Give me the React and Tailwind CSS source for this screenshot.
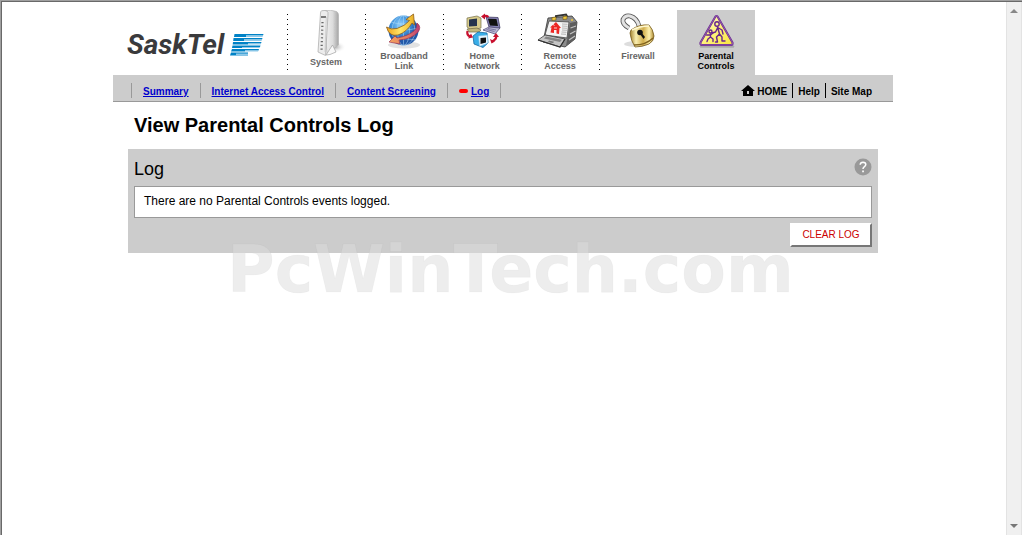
import React from 'react';

const subLinks = [
    { label: 'Summary' },
    { label: 'Internet Access Control' },
    { label: 'Content Screening' },
    { label: 'Log', current: true },
];

function SystemIcon() {
    return (
        <svg className="block shrink-0" width="78" height="47" viewBox="0 0 78 47" aria-hidden="true">
            <defs>
                <linearGradient id="routerSide" x1="0" x2="1">
                    <stop offset="0" stopColor="#f4f4f4" />
                    <stop offset="0.6" stopColor="#dcdcdc" />
                    <stop offset="1" stopColor="#a5a5a5" />
                </linearGradient>
                <radialGradient id="routerShade">
                    <stop offset="0" stopColor="#a5a5a5" />
                    <stop offset="1" stopColor="#fff" stopOpacity="0" />
                </radialGradient>
            </defs>
            <ellipse cx="48" cy="37" rx="11" ry="6" fill="url(#routerShade)" />
            <path d="M37 0.700Q44 -0.500 49.500 1.500Q51.500 2.500 51.500 5V35L40 44Z" fill="url(#routerSide)" stroke="#b4b4b4" strokeWidth="0.7" />
            <path d="M34.500 0.800Q38 0 40 1Q41.500 2 41 5L38.500 45.500L31 42L33.500 3Q33.600 1.500 34.500 0.800Z" fill="#ececec" stroke="#a6a6a6" strokeWidth="0.7" />
            <path d="M34 7h5" stroke="#555" strokeWidth="1.500" />
            <path d="M35.500 12L34.500 41" stroke="#666" strokeWidth="2.200" strokeDasharray="1.200 2.600" />
            <path d="M39.300 7L38 42" stroke="#c4c4c4" strokeWidth="0.700" />
            <path d="M39 45L45.500 35L49 42L43 44.500Z" fill="#f8f8f8" stroke="#a0a0a0" strokeWidth="0.700" />
            <path d="M47.500 13v14" stroke="#c8c8c8" strokeDasharray="2 1" />
        </svg>
    );
}

function BroadbandIcon() {
    return (
        <svg className="block shrink-0" width="78" height="41" viewBox="0 0 78 41" aria-hidden="true">
            <defs>
                <radialGradient id="globe" cx="0.4" cy="0.3">
                    <stop offset="0" stopColor="#8fd0ff" />
                    <stop offset="0.6" stopColor="#4294dc" />
                    <stop offset="1" stopColor="#2158a8" />
                </radialGradient>
                <linearGradient id="goldArrow" x1="0" x2="1">
                    <stop offset="0" stopColor="#f0a51c" />
                    <stop offset="0.5" stopColor="#ffe66a" />
                    <stop offset="1" stopColor="#e9ad22" />
                </linearGradient>
                <linearGradient id="pinkArrow" x1="0" x2="1">
                    <stop offset="0" stopColor="#f6a45e" />
                    <stop offset="0.6" stopColor="#e07a65" />
                    <stop offset="1" stopColor="#b93a75" />
                </linearGradient>
            </defs>
            <ellipse cx="39" cy="35" rx="16" ry="3.500" fill="#e2e2e2" />
            <circle cx="38.500" cy="20.500" r="15" fill="url(#globe)" />
            <g fill="none" stroke="#b5ddf7" strokeWidth="0.500">
                <ellipse cx="38.500" cy="20.500" rx="6" ry="15" />
                <ellipse cx="38.500" cy="20.500" rx="11.500" ry="15" />
                <path d="M38.500 6v29M26 12Q38 16 51 12M24 18Q38 22 53 18M27 30Q38 27 51 30" />
            </g>
            <path d="M52 13Q57 17 53 22Q47 29 34 30L35 34L24 32L30 26L32 28Q43 26 49 21Q52.500 18 52 13Z" fill="url(#pinkArrow)" stroke="#9c3450" strokeWidth="0.700" />
            <path d="M21.500 17Q26 20 32 18.500Q40 16 44.500 10.500L41 9.500L48.500 4L49.500 15L47 13Q42 22 33 25Q24 27 21.500 17Z" fill="url(#goldArrow)" stroke="#8e5e18" strokeWidth="0.800" />
        </svg>
    );
}

function HomeNetworkIcon() {
    return (
        <svg className="block shrink-0" width="78" height="41" viewBox="0 0 78 41" aria-hidden="true">
            {/* desktop */}
            <path d="M24 8L34 6L38 8V18L28 20L24 17Z" fill="#d8cc8c" stroke="#77704a" strokeWidth="0.700" />
            <path d="M26 9.500L34 8.500V16L26 16.500Z" fill="#26344d" />
            <path d="M24 19L34 18L38 20L36 22L26 22Z" fill="#c3b87b" stroke="#6e6745" strokeWidth="0.700" />
            {/* laptop */}
            <path d="M43 7L55 7.500L57 18L46 17Z" fill="#8582b4" stroke="#454066" strokeWidth="0.800" />
            <path d="M45 8.800L53.500 9L55 16L47 15.500Z" fill="#111" />
            <path d="M46 17L57 18L52 24L40 20Z" fill="#b9b7d4" stroke="#55517e" strokeWidth="0.800" />
            <path d="M45 18.500L53 20M43.500 19.500L51.500 21.500" stroke="#625e8d" strokeWidth="0.700" />
            {/* all in one */}
            <path d="M30 26L35 22L44 23L45 33L40 37.500L31 34Z" fill="#38aee8" stroke="#17689f" strokeWidth="0.800" />
            <path d="M35.500 26L44.500 25L45 33L36.500 36.500Z" fill="#e4f5ff" stroke="#83bfe2" strokeWidth="0.600" />
            <path d="M37.500 28L43 27.500V32.500L37.500 34Z" fill="#111" />
            <g fill="none" stroke="#c8102e" strokeWidth="2.200">
                <path d="M45.500 7Q43 5 40.500 6.500" />
                <path d="M24.500 21Q23.500 25 27 26.500" />
                <path d="M49 31.500Q54 29 53 26" />
            </g>
            <g fill="#c8102e">
                <path d="M38 6.500L42 3.500V9.500Z" />
                <path d="M30 27.500L25 28.500L28 23.500Z" />
                <path d="M53 23L56 27H50Z" />
                <path d="M47 29L48.500 33.500L52 31.500Z" />
            </g>
        </svg>
    );
}

function RemoteAccessIcon() {
    return (
        <svg className="block shrink-0" width="78" height="41" viewBox="0 0 78 41" aria-hidden="true">
            <path d="M35 9V6L45 4.500L47 8" fill="none" stroke="#333" strokeWidth="2" />
            <path d="M27 8L51 6L56 12L54 29L44 37L22 32Z" fill="#8c8c8c" stroke="#333" strokeWidth="0.800" />
            <path d="M49 13L56 11.500L54 29L45 36Z" fill="#5e5e5e" />
            <path d="M49.500 18L55 16M49 24L54.500 21M48 30L54 26" stroke="#c4c4c4" strokeWidth="1.200" />
            <path d="M28 11L48 12L46 28L24 25Z" fill="#f4f4f4" stroke="#444" strokeWidth="0.800" />
            <path d="M41 14l5.500 .3M41 16l5.500 .3M41 18l5 .3M41 20l5 .3M40.500 22l5 .3M40 24l5 .3" stroke="#a5a5a5" strokeWidth="0.800" />
            <path d="M35 12L40 18L38.500 18L38 24L35.500 23.600V20H33V23L29.500 22.500L30.500 17.500H29Z" fill="#ed2724" />
            <path d="M33 18h3M32 14.500l1.500 1" stroke="#fff" strokeWidth="0.800" />
            <path d="M24 25L44 29L39 37L17 30Z" fill="#c5c5c5" stroke="#444" strokeWidth="0.800" />
            <path d="M25 26.500L41 29.700L39 32L23 28.500Z" fill="#858585" />
            <path d="M28 30.500L33 31.700L32 33.300L27 32Z" fill="#777" />
            <path d="M17 30L39 37L44 29" fill="none" stroke="#333" strokeWidth="1.300" />
            <path d="M31 7.500l4-.5v3l-4 .5zM42 6.500l4-.5v3l-4 .5z" fill="#f2ca3b" stroke="#665319" strokeWidth="0.600" />
            <circle cx="51" cy="10" r="1" fill="#f2ca3b" />
        </svg>
    );
}

function FirewallIcon() {
    return (
        <svg className="block shrink-0" width="78" height="41" viewBox="0 0 78 41" aria-hidden="true">
            <defs>
                <linearGradient id="brass" x1="0" x2="1">
                    <stop offset="0" stopColor="#a3812c" />
                    <stop offset="0.25" stopColor="#faefb2" />
                    <stop offset="0.55" stopColor="#d0ad4c" />
                    <stop offset="0.8" stopColor="#fff1ae" />
                    <stop offset="1" stopColor="#aa8731" />
                </linearGradient>
            </defs>
            <ellipse cx="37" cy="34" rx="12" ry="3" fill="#ddd" />
            <path d="M30 18Q23 14 24 9.500Q26 5 31 6Q38 8 40 16" fill="none" stroke="#555" strokeWidth="4.800" />
            <path d="M30 18Q23 14 24 9.500Q26 5 31 6Q38 8 40 16" fill="none" stroke="#e2e2e2" strokeWidth="3" />
            <path d="M32 20Q40 14 50 15Q54 19 55 26Q55 31 50 34Q43 37 36 37Q32 31 31 23Z" fill="url(#brass)" stroke="#755b1d" strokeWidth="0.800" />
            <path d="M33 20Q41 16 50 16" fill="none" stroke="#fff7cf" strokeWidth="1.500" />
            <path d="M35 35Q47 35 54 28" fill="none" stroke="#80621d" strokeWidth="1.300" />
            <circle cx="41" cy="22.500" r="2.800" fill="#111" />
            <path d="M42 22L46 27L44.500 29L41 24Z" fill="#111" />
        </svg>
    );
}

function ParentalIcon() {
    return (
        <svg className="block shrink-0" width="78" height="41" viewBox="0 0 78 41" aria-hidden="true">
            <defs>
                <linearGradient id="signYellow" x1="0" x2="1" y2="1">
                    <stop offset="0" stopColor="#fffbd4" />
                    <stop offset="0.5" stopColor="#fff27b" />
                    <stop offset="1" stopColor="#f7e33e" />
                </linearGradient>
            </defs>
            <path d="M24 36.500h32" stroke="#aaa" strokeWidth="2.500" strokeLinecap="round" />
            <path d="M38.500 6.500Q39.500 5.500 40.500 6.500L55.500 32.500Q56 35 54 35H25Q23 35 23.500 32.500Z" fill="url(#signYellow)" stroke="#68258e" strokeWidth="2" strokeLinejoin="round" />
            <path d="M38.500 6.500Q39.500 5.500 40.500 6.500L55.500 32.500Q56 35 54 35H25Q23 35 23.500 32.500Z" fill="none" stroke="#b890c9" strokeWidth="0.500" strokeLinejoin="round" />
            <g fill="none" stroke="#68258e" strokeWidth="1.400" strokeLinecap="round" strokeLinejoin="round">
                <circle cx="40" cy="14" r="2.200" />
                <path d="M40.500 17L42.500 24L39.500 27L40.500 32L38.500 32M42.500 24L45 27L45 31L48 31M40.500 18L38.500 22L35 23M41.500 18L45 20L46 24" />
                <circle cx="33.500" cy="21.500" r="1.500" />
                <path d="M33.500 24V27L31 29L30 31.500M33.500 27L36 29L36 31.500M33.500 25L29.500 25M33.500 25L36 23" />
            </g>
        </svg>
    );
}

const tabs = [
    { lines: ['System'], Icon: SystemIcon },
    { lines: ['Broadband', 'Link'], Icon: BroadbandIcon },
    { lines: ['Home', 'Network'], Icon: HomeNetworkIcon },
    { lines: ['Remote', 'Access'], Icon: RemoteAccessIcon },
    { lines: ['Firewall'], Icon: FirewallIcon },
    { lines: ['Parental', 'Controls'], Icon: ParentalIcon, active: true },
];

function Logo() {
    return (
        <div className="flex w-[174px] items-center gap-[5px] pt-1 pl-[14px]">
            <span className="w-[98px] font-['Roboto',sans-serif] text-[28px] leading-8 font-bold whitespace-nowrap italic text-[#3a3a3c]">SaskTel</span>
            <svg className="shrink-0" width="34" height="22" viewBox="0 0 34 22" aria-hidden="true">
                <path d="M4.500 0H33.500L33 1.500H16V3H4ZM3.500 4H32.500L32 5.500H14V7H3.200ZM3 8H31.500L31 9.500H18V10.500H2.700ZM2.500 11.500H30.500L30 13H12V14H2ZM2 15H29L28.500 16.500H15V17.500H1ZM1 18.500H18V21.500H0Z" fill="#0082c6" />
                <path d="M16 1.500H33L32.500 3H16ZM14 5.500H32L31.500 7H14ZM18 9.500H31L30.500 10.500H18ZM12 13H30L29.500 14H12ZM15 16.500H28.500L28 17.500H15ZM6 19.500H18V21.500H6Z" fill="#8fc9e9" />
            </svg>
        </div>
    );
}

function Header() {
    return (
        <header className="flex pt-2">
            <Logo />
            <nav className="flex" aria-label="Main">
                {tabs.map(({ lines, Icon, active }) => (
                    <a
                        href="#"
                        key={lines[0]}
                        className={
                            active
                                ? 'flex h-[65px] w-[78px] flex-col bg-[#ccc] text-black'
                                : 'flex h-[65px] w-[78px] flex-col bg-[linear-gradient(#000_1px,transparent_1px)] bg-[length:1px_5px] bg-[position:0_4px] bg-repeat-y bg-clip-content pb-1 text-[#666]'
                        }
                    >
                        <Icon />
                        <span className="text-center text-[9px] leading-[10px] font-bold">
                            {lines.map((line) => (
                                <span className="block" key={line}>{line}</span>
                            ))}
                        </span>
                    </a>
                ))}
            </nav>
        </header>
    );
}

function SubNav() {
    return (
        <div className="flex h-[27px] items-center justify-between border-b border-[#999] bg-[#ccc] pt-1 pr-[21px] pl-[18px] text-[10px] leading-[15px] font-bold">
            <ul className="flex border-r border-[#999]">
                {subLinks.map((link) => (
                    <li key={link.label} className="flex h-[15px] items-center gap-[3px] border-l border-[#999] px-[11px]">
                        {link.current && <span className="mt-[2px] h-1 w-[9px] rounded-full bg-[#f00]" />}
                        <a href="#" className="pt-[3px] text-[#00c] underline">{link.label}</a>
                    </li>
                ))}
            </ul>
            <ul className="flex text-black">
                <li className="flex h-[15px] items-center gap-[2px] pr-[5px]">
                    <svg width="14" height="11" viewBox="0 0 14 11" aria-hidden="true">
                        <path d="M7 0L14 6H12V11H2V6H0Z" fill="#000" />
                        <path d="M6 6h2v3H6z" fill="#ccc" />
                    </svg>
                    <a href="#" className="pt-[3px]">HOME</a>
                </li>
                <li className="flex h-[15px] items-center border-l border-black px-[5px]">
                    <a href="#" className="pt-[3px]">Help</a>
                </li>
                <li className="flex h-[15px] items-center border-l border-black pl-[5px]">
                    <a href="#" className="pt-[3px]">Site Map</a>
                </li>
            </ul>
        </div>
    );
}

function LogPanel() {
    return (
        <section className="mx-[15px] bg-[#ccc] p-[6px]">
            <div className="flex h-[31px] items-start justify-between pt-[3px]">
                <h2 className="text-[18px] leading-[22px]">Log</h2>
                <button type="button" aria-label="Help">
                    <svg className="block" width="18" height="18" viewBox="0 0 18 18" aria-hidden="true">
                        <circle cx="9" cy="9" r="8.500" fill="#999" />
                        <path d="M6.200 6.700Q6.400 4.200 9 4.200Q11.800 4.300 11.800 6.600Q11.800 7.900 10.200 8.900Q9 9.700 9 11" fill="none" stroke="#fff" strokeWidth="1.500" />
                        <path d="M8.200 12.500h1.700v1.700H8.200z" fill="#fff" />
                    </svg>
                </button>
            </div>
            <p className="border border-[#999] bg-white px-[9px] pt-[6px] pb-2 text-[12px] leading-4">
                There are no Parental Controls events logged.
            </p>
            <div className="mt-[5px] flex justify-end">
                <button
                    type="button"
                    className="h-6 w-[82px] border-2 border-t-white border-r-[#777] border-b-[#777] border-l-white bg-white text-[10px] leading-5 text-[#c00]"
                >
                    CLEAR LOG
                </button>
            </div>
        </section>
    );
}

export default function App() {
    return (
        <div className="min-h-screen border-t border-l border-[#a0a0a0] bg-white font-['Liberation_Sans',Arial,sans-serif] text-black">
            <div className="flex min-h-[calc(100vh-1px)] border-t border-l border-[#696969]">
                <main className="flex-1 pr-[2px]">
                    <div className="relative mx-auto max-w-[780px]">
                        <Header />
                        <SubNav />
                        <h1 className="px-[21px] pt-[9px] pb-[10px] text-[20px] leading-7 font-bold">View Parental Controls Log</h1>
                        <LogPanel />
                        {/* site watermark, lies over the bottom edge of the panel */}
                        <div className="pointer-events-none absolute top-[231px] left-0 w-full pl-[114px] font-['DejaVu_Sans',sans-serif] text-[65px] leading-[74px] font-bold text-[#dcdcdc]/50 [-webkit-text-stroke:1px_rgba(0,0,0,0.02)]">
                            PcWinTech.com
                        </div>
                    </div>
                </main>
                <div className="flex w-4 flex-col items-center justify-between border-x border-[#e3e3e3] bg-[#f0f0f0] py-[7px]" aria-hidden="true">
                    <svg width="8" height="4" viewBox="0 0 8 4"><path d="M4 0L8 4H0Z" fill="#888" /></svg>
                    <svg width="8" height="4" viewBox="0 0 8 4"><path d="M0 0H8L4 4Z" fill="#777" /></svg>
                </div>
            </div>
        </div>
    );
}
